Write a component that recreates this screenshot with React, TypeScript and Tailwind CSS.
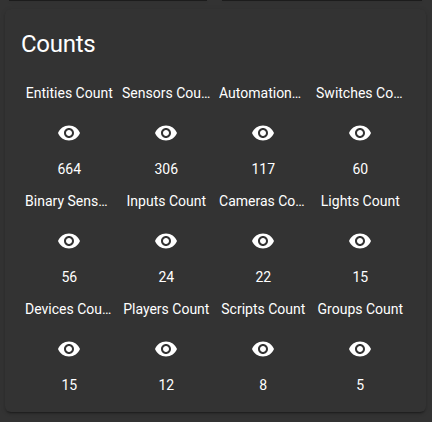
import React from 'react'
import { MdVisibility } from 'react-icons/md'

type Entity = { name: string; state: number }

const entities: Entity[] = [
    { name: 'Entities Count', state: 664 },
    { name: 'Sensors Count', state: 306 },
    { name: 'Automations Count', state: 117 },
    { name: 'Switches Count', state: 60 },
    { name: 'Binary Sensors Count', state: 56 },
    { name: 'Inputs Count', state: 24 },
    { name: 'Cameras Count', state: 22 },
    { name: 'Lights Count', state: 15 },
    { name: 'Devices Count', state: 15 },
    { name: 'Players Count', state: 12 },
    { name: 'Scripts Count', state: 8 },
    { name: 'Groups Count', state: 5 },
]

function Glance({ name, state }: Entity) {
    return (
        <div className="flex flex-col items-center h-[108px] min-w-0">
            <div className="w-[88.5px] truncate text-center leading-5">{name}</div>
            <div className="flex h-14 pt-1 items-center justify-center">
                <MdVisibility size={24} />
            </div>
            <div className="leading-5">{state}</div>
        </div>
    )
}

function App() {
    return (
        <div className="h-[422px] w-[432px] overflow-hidden bg-[#333333] px-[5px] font-[Roboto,sans-serif] text-white">
            {/* bottom edge of the cards above */}
            <div className="flex h-[9px] gap-[15px] px-1">
                <div className="h-px w-[198px] bg-[#1c1c1c] shadow-sm"></div>
                <div className="h-px w-[200px] bg-[#1c1c1c] shadow-sm"></div>
            </div>
            <div className="h-[403px] w-[421px] rounded-md bg-[#333333] shadow-[0_2px_2px_0_rgba(0,0,0,0.14),0_1px_5px_0_rgba(0,0,0,0.12),0_3px_1px_-2px_rgba(0,0,0,0.2)]">
                <h1 className="px-4 pt-[15px] text-2xl leading-10 tracking-[-0.012em]">Counts</h1>
                <div className="grid grid-cols-[repeat(4,97px)] pl-[15.8px] pt-[19px] text-sm">
                    {entities.map((entity) => (
                        <Glance key={entity.name} {...entity} />
                    ))}
                </div>
            </div>
        </div>
    )
}

export default App
